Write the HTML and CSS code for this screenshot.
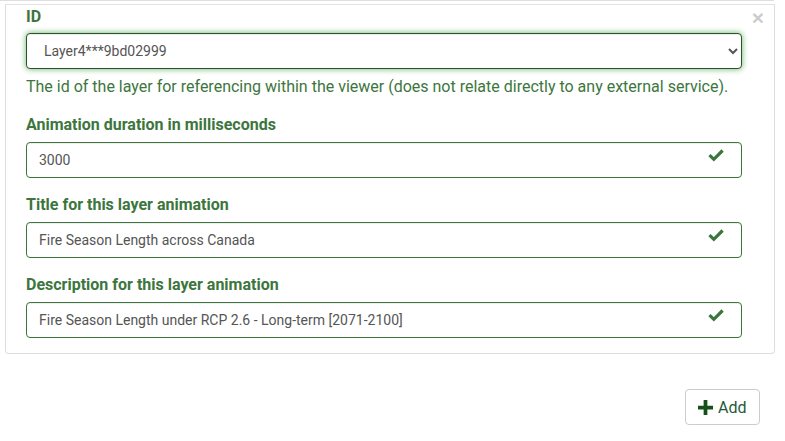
FILE: index.html
```html
<!DOCTYPE html>
<html lang="en">
<head>
<meta charset="utf-8">
<title>Layer animation</title>
<link rel="stylesheet" href="styles.css">
</head>
<body>
<div class="prev-card"></div>
<div class="card">
  <button class="close" type="button" aria-label="Close">&times;</button>
  <div class="form-group">
    <label class="label">ID</label>
    <select class="control select">
      <option>Layer4***9bd02999</option>
    </select>
    <p class="help">The id of the layer for referencing within the viewer (does not relate directly to any external service).</p>
  </div>
  <div class="form-group">
    <label class="label">Animation duration in milliseconds</label>
    <div class="field">
      <input class="control" type="text" value="3000">
      <svg class="ok" viewBox="0 0 16 14" width="16" height="14"><path d="M1.5 7.2 L5.8 11.3 L14.6 2.5" fill="none" stroke="currentColor" stroke-width="3.2" stroke-linecap="butt" stroke-linejoin="miter"/></svg>
    </div>
  </div>
  <div class="form-group">
    <label class="label">Title for this layer animation</label>
    <div class="field">
      <input class="control" type="text" value="Fire Season Length across Canada">
      <svg class="ok" viewBox="0 0 16 14" width="16" height="14"><path d="M1.5 7.2 L5.8 11.3 L14.6 2.5" fill="none" stroke="currentColor" stroke-width="3.2" stroke-linecap="butt" stroke-linejoin="miter"/></svg>
    </div>
  </div>
  <div class="form-group last">
    <label class="label">Description for this layer animation</label>
    <div class="field">
      <input class="control" type="text" value="Fire Season Length under RCP 2.6 - Long-term [2071-2100]">
      <svg class="ok" viewBox="0 0 16 14" width="16" height="14"><path d="M1.5 7.2 L5.8 11.3 L14.6 2.5" fill="none" stroke="currentColor" stroke-width="3.2" stroke-linecap="butt" stroke-linejoin="miter"/></svg>
    </div>
  </div>
</div>
<div class="actions">
  <button class="btn" type="button">
    <svg class="plus" viewBox="0 0 16 16" width="15" height="15"><path d="M6 0h4v6h6v4h-6v6H6v-6H0V6h6z" fill="currentColor"/></svg>
    <span>Add</span>
  </button>
</div>
</body>
</html>
```

FILE: styles.css
```css
html, body {
  margin: 0;
  padding: 0;
  background: #fff;
}
body {
  font-family: Roboto, "Liberation Sans", Arial, sans-serif;
  font-size: 16px;
  color: #333;
  width: 785px;
}
.prev-card {
  width: 774px;
  height: 1px;
  background: #dedede;
}
.card {
  position: relative;
  margin: 3px 0 0 5px;
  width: 716px;
  padding: 0 32px 15px 20px;
  border: 1px solid #ddd;
  border-top-color: #e2e2e2;
  border-radius: 0 0 4px 4px;
}
.close {
  position: absolute;
  top: 2px;
  right: 10px;
  padding: 0;
  border: 0;
  background: transparent;
  font-family: "Liberation Sans", Arial, sans-serif;
  font-size: 21px;
  font-weight: bold;
  line-height: 21px;
  color: #000;
  opacity: 0.2;
  cursor: pointer;
}
.form-group {
  margin-bottom: 15px;
}
.form-group.last {
  margin-bottom: 0;
}
.label {
  display: block;
  font-weight: bold;
  font-size: 16px;
  line-height: 24px;
  color: #3c763d;
  margin-bottom: 5px;
}
.close + .form-group .label {
  margin-bottom: 4px;
}
.control {
  display: block;
  box-sizing: border-box;
  width: 716px;
  height: 36px;
  margin: 0;
  padding: 6px 12px;
  font-family: Roboto, "Liberation Sans", Arial, sans-serif;
  font-size: 14px;
  color: #555;
  background: #fff;
  border: 1px solid #3c763d;
  border-radius: 4px;
  box-shadow: inset 0 1px 1px rgba(0, 0, 0, 0.075);
  outline: none;
}
.select {
  border-color: #2b542c;
  box-shadow: inset 0 1px 1px rgba(0, 0, 0, 0.075), 0 0 6px #67b168;
  padding-left: 13px;
}
.help {
  margin: 6px 0 0;
  font-size: 16px;
  line-height: 23px;
  color: #3c763d;
}
.field {
  position: relative;
}
.ok {
  position: absolute;
  right: 18px;
  top: 6px;
  color: #3c763d;
}
.actions {
  display: flex;
  justify-content: flex-end;
  padding: 35px 25px 0 0;
}
.btn {
  display: flex;
  align-items: center;
  gap: 5px;
  box-sizing: border-box;
  width: 75px;
  height: 36px;
  padding: 0 12px;
  font-family: Roboto, "Liberation Sans", Arial, sans-serif;
  font-size: 16px;
  color: #1e5a3a;
  background: #fff;
  border: 1px solid #ccc;
  border-radius: 4px;
  cursor: pointer;
}
.plus {
  color: #15501a;
  flex: none;
}
```
